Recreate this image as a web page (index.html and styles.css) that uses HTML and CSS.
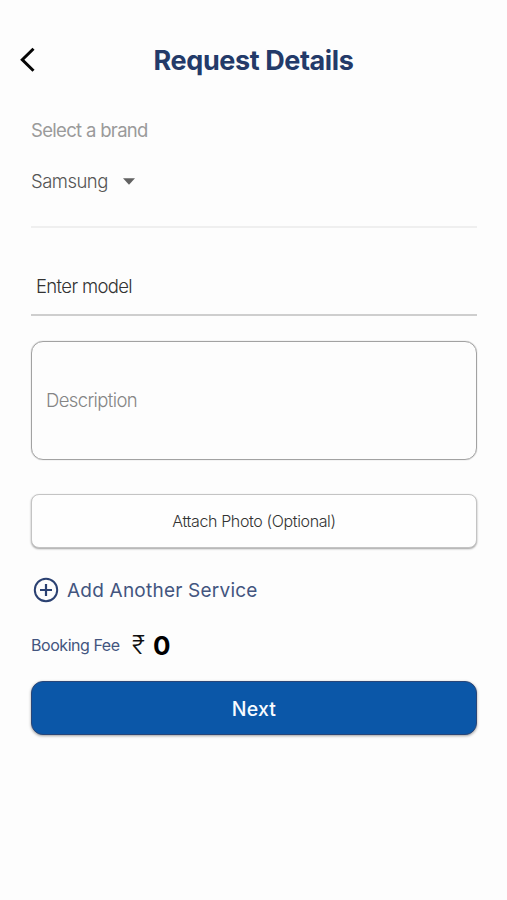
FILE: index.html
```html
<!DOCTYPE html>
<html lang="en">
<head>
<meta charset="utf-8">
<title>Request Details</title>
<link rel="stylesheet" href="styles.css">
</head>
<body>
<header class="header">
  <svg class="back" width="18" height="26" viewBox="0 0 18 26" fill="none" stroke="#050505" stroke-width="3"><path d="M15.5 1.8 4.3 12.7 15.5 23.8"/></svg>
  <h1 class="title"><span>Request Details</span></h1>
</header>
<main class="form">
  <div class="label"><span>Select a brand</span></div>
  <div class="select">
    <span class="select-value">Samsung</span>
    <svg width="12" height="7" viewBox="0 0 12 7" fill="#626262"><path d="M0 .2h12L6 6.8z"/></svg>
  </div>
  <div class="model"><span>Enter model</span></div>
  <div class="description"><span>Description</span></div>
  <button class="attach"><span>Attach Photo (Optional)</span></button>
  <div class="add">
    <svg width="26" height="26" viewBox="0 0 26 26" fill="none" stroke="#2b4172" stroke-width="2"><circle cx="13" cy="13" r="11.2"/><path d="M13 7v12M7 13h12" stroke-width="2.2"/></svg>
    <span>Add Another Service</span>
  </div>
  <div class="fee">
    <span class="fee-label">Booking Fee</span>
    <span class="rupee">₹</span>
    <span class="amount">0</span>
  </div>
  <button class="next"><span>Next</span></button>
</main>
</body>
</html>
```

FILE: styles.css
```css
* { box-sizing: border-box; }
body {
  margin: 0;
  min-height: 900px;
  background: #fdfdfd;
  font-family: Inter, "Liberation Sans", sans-serif;
}
span { white-space: nowrap; }
button { font-family: inherit; padding: 0; cursor: pointer; }
.header {
  display: grid;
  grid-template-columns: 45px 1fr 45px;
  align-items: center;
  height: 76px;
  margin-top: 22px;
}
.back { margin-left: 18px; }
.title {
  margin: 0;
  padding-top: 2px;
  color: #233a69;
  font-size: 27px;
  font-weight: 650;
  line-height: 32px;
  letter-spacing: -0.4px;
  text-align: center;
}
.form {
  display: flex;
  flex-direction: column;
  padding: 0 30px 0 31px;
}
.label {
  height: 28px;
  margin-top: 18px;
  color: #9a9a9a;
  font-size: 18.5px;
  line-height: 28px;
  letter-spacing: -0.68px;
}
.select {
  display: flex;
  align-items: center;
  gap: 15px;
  height: 84px;
  padding-bottom: 8px;
  color: #555;
  font-size: 18.5px;
  font-weight: 350;
  letter-spacing: -0.52px;
  border-bottom: 2px solid #efefef;
}
.model {
  height: 88px;
  padding: 44px 5px 0;
  color: #333;
  font-size: 18.5px;
  font-weight: 350;
  line-height: 28px;
  letter-spacing: -0.65px;
  border-bottom: 2px solid #cecece;
}
.description {
  display: flex;
  align-items: center;
  height: 119px;
  margin-top: 24.5px;
  padding-left: 14px;
  color: #858585;
  font-size: 18.5px;
  font-weight: 350;
  letter-spacing: -0.63px;
  border: 1px solid #a2a2a2;
  border-radius: 12px;
  box-shadow: 0 0 1px #999;
}
.attach {
  height: 54px;
  margin-top: 34.5px;
  padding-bottom: 1px;
  background: #fefefe;
  color: #333;
  font-size: 16px;
  font-weight: 350;
  letter-spacing: -0.37px;
  border: 1px solid #c4c4c4;
  border-radius: 8px;
  box-shadow: 0 1px 2px #a0a0a0;
}
.add {
  display: flex;
  align-items: center;
  gap: 8px;
  height: 28px;
  margin: 28px 0 0 2px;
  color: #43557f;
  font-size: 19px;
  letter-spacing: 0.22px;
}
.fee {
  display: flex;
  align-items: center;
  height: 36px;
  margin-top: 23px;
  color: #43557f;
}
.fee-label { width: 101px; font-size: 16px; letter-spacing: -0.45px; }
.rupee { width: 21px; color: #111; font-size: 25px; font-weight: 300; }
.amount { color: #000; font-size: 26px; font-weight: 700; }
.next {
  height: 54px;
  margin-top: 18px;
  padding-top: 1px;
  background: #0b57a8;
  color: #f8fbff;
  font-size: 19.5px;
  font-weight: 550;
  letter-spacing: 0.2px;
  border: 1px solid #294678;
  border-radius: 12px;
  box-shadow: 0 1px 3px rgba(0, 0, 0, .38);
}
```
